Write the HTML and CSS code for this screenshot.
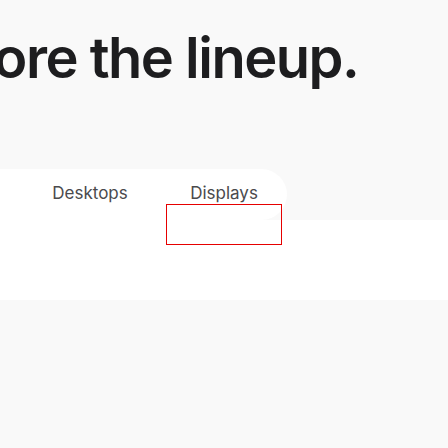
FILE: index.html
```html
<!DOCTYPE html>
<html>
<head>
<meta charset="utf-8">
<link rel="stylesheet" href="styles.css">
</head>
<body>
<section class="hero">
  <h1 class="headline">Explore the lineup.</h1>
  <nav class="tabs">
    <div class="tab">Desktops</div>
    <div class="tab tab-active">Displays<span class="focus-box"></span></div>
  </nav>
</section>
<section class="spacer"></section>
<section class="gallery"></section>
</body>
</html>
```

FILE: styles.css
```css
html, body {
  margin: 0;
  padding: 0;
}
body {
  background: #ffffff;
  font-family: Inter, "Noto Sans", sans-serif;
  overflow: hidden;
  width: 448px;
  height: 448px;
}
.hero {
  background: #f9f9f9;
  height: 220px;
  padding-top: 24px;
  box-sizing: border-box;
  overflow: visible;
  position: relative;
}
.headline {
  margin: 0 0 0 -116px;
  font-size: 56px;
  font-weight: 600;
  line-height: 68px;
  color: #1d1d1f;
  letter-spacing: -1.5px;
  white-space: nowrap;
}
.tabs {
  margin-top: 77px;
  width: 287px;
  height: 51px;
  background: #ffffff;
  border-radius: 0 25.5px 25.5px 0;
  display: flex;
  gap: 18px;
  padding-left: 32px;
  box-sizing: border-box;
}
.tab {
  position: relative;
  width: 116px;
  text-align: center;
  font-size: 17px;
  color: #4a4a4d;
  line-height: 20px;
  padding-top: 14px;
}
.focus-box {
  position: absolute;
  left: 0;
  top: 35px;
  width: 116px;
  height: 41px;
  border: 1.5px solid #e60000;
  box-sizing: border-box;
}
.spacer {
  height: 80px;
  background: #ffffff;
}
.gallery {
  height: 148px;
  background: #f9f9f9;
}
```
